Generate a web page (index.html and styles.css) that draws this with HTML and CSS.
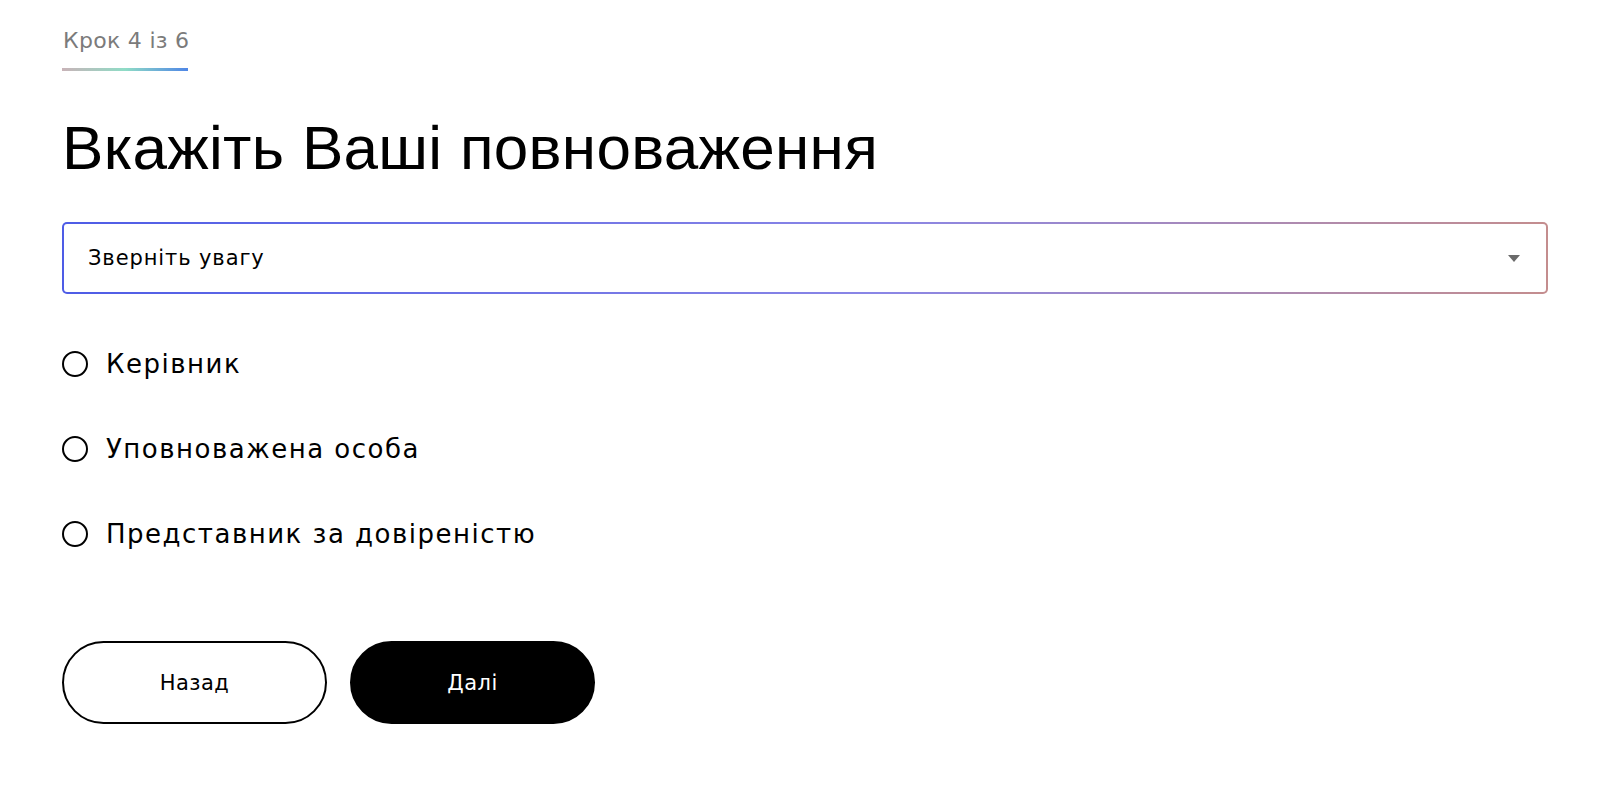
FILE: index.html
```html
<!DOCTYPE html>
<html lang="uk">
<head>
<meta charset="utf-8">
<title>Крок 4 із 6</title>
<link rel="stylesheet" href="styles.css">
</head>
<body>
<main class="page">
  <div class="step">
    <span class="step-label">Крок 4 із 6</span>
    <span class="step-line"></span>
  </div>
  <h1 class="title">Вкажіть Ваші повноваження</h1>
  <div class="select">
    <div class="select-inner">
      <span class="select-text">Зверніть увагу</span>
      <span class="caret"></span>
    </div>
  </div>
  <ul class="options">
    <li class="option"><span class="radio"></span><span class="option-label">Керівник</span></li>
    <li class="option"><span class="radio"></span><span class="option-label">Уповноважена особа</span></li>
    <li class="option"><span class="radio"></span><span class="option-label">Представник за довіреністю</span></li>
  </ul>
  <div class="actions">
    <button class="btn btn-outline">Назад</button>
    <button class="btn btn-solid">Далі</button>
  </div>
</main>
</body>
</html>
```

FILE: styles.css
```css
* { box-sizing: border-box; }
html, body { margin: 0; padding: 0; background: #fff; }
body {
  font-family: "DejaVu Sans", "Liberation Sans", sans-serif;
  color: #000;
}
.page {
  padding: 28px 52px 0 62px;
}
.step {
  display: inline-flex;
  flex-direction: column;
  gap: 15px;
}
.step-label {
  font-size: 22px;
  color: #7b7b7b;
  padding-left: 1px;
  letter-spacing: 0.3px;
}
.step-line {
  display: block;
  width: 126px;
  height: 3px;
  background: linear-gradient(90deg, #c9b3b8 0%, #8fdcc6 50%, #4f86e6 100%);
}
.title {
  margin: 40px 0 0 0;
  font-family: "Liberation Sans", Arial, sans-serif;
  font-size: 62px;
  font-weight: 400;
  line-height: 1.2;
  letter-spacing: 0.3px;
}
.select {
  margin-top: 37px;
  padding: 2px;
  border-radius: 5px;
  background: linear-gradient(90deg, #4e5ce6 0%, #8a86e6 55%, #c48d8e 100%);
}
.select-inner {
  height: 68px;
  background: #fff;
  border-radius: 3px;
  display: flex;
  align-items: center;
  justify-content: space-between;
  padding: 0 26px 0 24px;
}
.select-text {
  font-size: 21px;
  letter-spacing: 0.9px;
}
.caret {
  width: 0;
  height: 0;
  border-left: 6px solid transparent;
  border-right: 6px solid transparent;
  border-top: 7px solid #6a6a6a;
}
.options {
  list-style: none;
  margin: 55px 0 0 0;
  padding: 0;
  display: flex;
  flex-direction: column;
  gap: 55px;
}
.option {
  display: flex;
  align-items: center;
  gap: 18px;
  height: 30px;
}
.radio {
  width: 26px;
  height: 26px;
  border: 2px solid #000;
  border-radius: 50%;
  flex: none;
}
.option-label {
  font-size: 26px;
  letter-spacing: 1.5px;
}
.actions {
  margin-top: 92px;
  display: flex;
  gap: 23px;
}
.btn {
  height: 83px;
  border-radius: 42px;
  font-family: inherit;
  font-size: 21px;
  letter-spacing: 0.5px;
  cursor: pointer;
}
.btn-outline {
  width: 265px;
  background: #fff;
  color: #000;
  border: 2px solid #000;
}
.btn-solid {
  width: 245px;
  background: #000;
  color: #fff;
  border: 2px solid #000;
}
```
